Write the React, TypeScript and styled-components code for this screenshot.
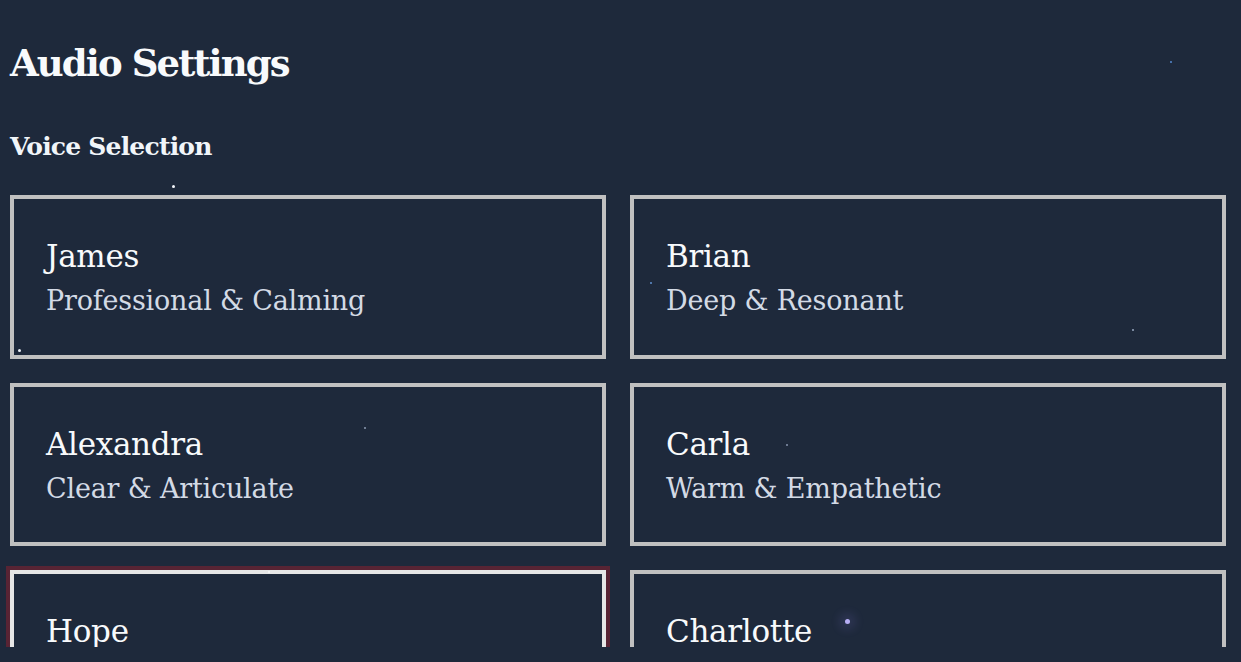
import React from "react";
import styled, { createGlobalStyle } from "styled-components";

const GlobalStyle = createGlobalStyle`
  html, body {
    margin: 0;
    padding: 0;
    background: #1e293b;
  }
  body {
    font-family: "DejaVu Serif", "Liberation Serif", serif;
    color: #f8fafc;
  }
`;

const Page = styled.div`
  position: relative;
  height: 662px;
  background: #1e293b;
  overflow: hidden;
`;

const Viewport = styled.main`
  height: 647px;
  overflow: hidden;
  padding: 41px 15px 0 10px;
  box-sizing: border-box;
`;

const Title = styled.h1`
  margin: 0 0 46px;
  font-size: 37px;
  line-height: 44px;
  font-weight: 700;
  letter-spacing: -1.9px;
  color: #f8fafc;
`;

const SectionTitle = styled.h2`
  margin: 0 0 32px;
  font-size: 25px;
  line-height: 32px;
  font-weight: 700;
  letter-spacing: -0.8px;
  color: #f1f5f9;
`;

const VoiceGrid = styled.div`
  display: grid;
  grid-template-columns: repeat(2, 596px);
  column-gap: 24px;
  row-gap: 24px;
`;

const VoiceCard = styled.button<{ $selected?: boolean }>`
  display: flex;
  flex-direction: column;
  align-items: flex-start;
  box-sizing: border-box;
  height: 163.5px;
  padding: 38px 32px 35px;
  margin: 0;
  background: transparent;
  border: 4px solid ${(p) => (p.$selected ? "#e6e6e6" : "#c0c0c0")};
  outline: ${(p) => (p.$selected ? "4px solid #582434" : "none")};
  font-family: inherit;
  text-align: left;
  cursor: pointer;
`;

const VoiceName = styled.span`
  display: block;
  font-size: 31px;
  line-height: 38px;
  font-weight: 400;
  letter-spacing: -0.3px;
  color: #f8fafc;
  margin-bottom: 9px;
`;

const VoiceDesc = styled.span`
  display: block;
  font-size: 27px;
  line-height: 34px;
  font-weight: 400;
  letter-spacing: -0.2px;
  color: #d3dae5;
`;

const Particle = styled.span<{ $size: number; $color: string; $glow?: boolean }>`
  position: absolute;
  width: ${(p) => p.$size}px;
  height: ${(p) => p.$size}px;
  margin: ${(p) => -p.$size / 2}px 0 0 ${(p) => -p.$size / 2}px;
  border-radius: 50%;
  background: ${(p) => p.$color};
  box-shadow: ${(p) => (p.$glow ? `0 0 10px 6px rgba(160, 140, 255, 0.12)` : "none")};
  pointer-events: none;
`;

type Voice = { name: string; desc?: string; selected?: boolean };

const voices: Voice[] = [
  { name: "James", desc: "Professional & Calming" },
  { name: "Brian", desc: "Deep & Resonant" },
  { name: "Alexandra", desc: "Clear & Articulate" },
  { name: "Carla", desc: "Warm & Empathetic" },
  { name: "Hope", selected: true },
  { name: "Charlotte" },
];

const particles = [
  { x: 173, y: 186, s: 3, c: "#f4f6fb" },
  { x: 19, y: 350, s: 3, c: "#eef2f8" },
  { x: 365, y: 428, s: 2, c: "#8d9bb3" },
  { x: 651, y: 283, s: 1.5, c: "#5a86c0" },
  { x: 1133, y: 330, s: 1.5, c: "#8d9bb3" },
  { x: 787, y: 445, s: 1.5, c: "#7d8aa3" },
  { x: 1171, y: 62, s: 1.5, c: "#4f7fbf" },
  { x: 847, y: 621, s: 5, c: "#b7aef5", glow: true },
  { x: 269, y: 572, s: 2, c: "#f7f7f7" },
];

export default function App() {
  return (
    <>
      <GlobalStyle />
      <Page>
        <Viewport>
          <Title>Audio Settings</Title>
          <SectionTitle>Voice Selection</SectionTitle>
          <VoiceGrid>
            {voices.map((v) => (
              <VoiceCard key={v.name} $selected={v.selected} type="button">
                <VoiceName>{v.name}</VoiceName>
                {v.desc && <VoiceDesc>{v.desc}</VoiceDesc>}
              </VoiceCard>
            ))}
          </VoiceGrid>
        </Viewport>
        {particles.map((p, i) => (
          <Particle
            key={i}
            $size={p.s}
            $color={p.c}
            $glow={p.glow}
            style={{ left: p.x, top: p.y }}
          />
        ))}
      </Page>
    </>
  );
}
